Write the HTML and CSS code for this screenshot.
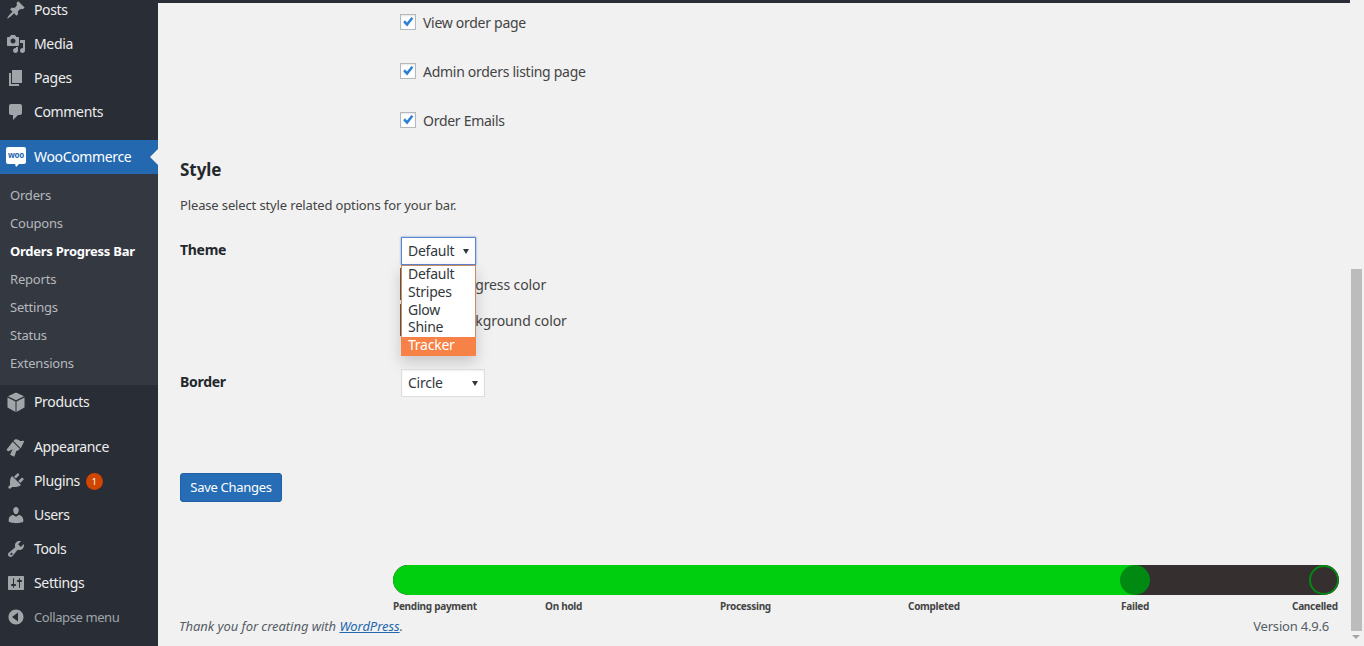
FILE: index.html
```html
<!DOCTYPE html>
<html lang="en">
<head>
<meta charset="utf-8">
<title>Orders Progress Bar</title>
<link rel="stylesheet" href="styles.css">
</head>
<body>
<div class="shell">
  <nav class="sidebar">
    <a class="item"><svg class="ico" viewBox="0 0 20 20"><path d="M10.44 3.02l1.82-1.82 6.36 6.35-1.83 1.82c-1.05-.68-2.48-.57-3.41.36l-.75.75c-.92.93-1.04 2.35-.35 3.41l-1.83 1.82-2.41-2.41-2.8 2.79c-.42.42-3.38 2.71-3.8 2.29s1.86-3.39 2.28-3.81l2.79-2.79L4.1 9.36l1.83-1.82c1.05.69 2.48.57 3.4-.36l.75-.75c.93-.92 1.05-2.35.36-3.41z"/></svg><span>Posts</span></a>
    <a class="item"><svg class="ico" viewBox="0 0 20 20"><path d="M13 11V4c0-.55-.45-1-1-1h-1.67L9 1H5L3.67 3H2c-.55 0-1 .45-1 1v7c0 .55.45 1 1 1h10c.55 0 1-.45 1-1zM7 4.500c1.380 0 2.500 1.120 2.500 2.500S8.380 9.500 7 9.500 4.500 8.380 4.500 7 5.620 4.500 7 4.500zM14 6h5v10.500c0 1.380-1.120 2.500-2.500 2.500S14 17.880 14 16.500s1.120-2.500 2.500-2.500c.17 0 .34.020.5.050V9h-3V6zm-4 8.050V13h2v3.500c0 1.380-1.120 2.500-2.500 2.500S7 17.880 7 16.500 8.120 14 9.500 14c.17 0 .34.020.5.050z"/></svg><span>Media</span></a>
    <a class="item"><svg class="ico" viewBox="0 0 20 20"><path d="M6 15V2h10v13H6zm-1 1h8v2H3V5h2v11z"/></svg><span>Pages</span></a>
    <a class="item"><svg class="ico" viewBox="0 0 20 20"><path d="M5 2h9c1.100 0 2 .9 2 2v7c0 1.100-.9 2-2 2h-2l-5 5v-5H5c-1.100 0-2-.9-2-2V4c0-1.100.9-2 2-2z"/></svg><span>Comments</span></a>
    <div class="current">
      <a class="item item-current"><svg class="ico woo" viewBox="0 0 20 20"><path class="woo-bg" d="M2 0h16a2 2 0 0 1 2 2v13a2 2 0 0 1-2 2h-5l-3 3-1-3H2a2 2 0 0 1-2-2V2a2 2 0 0 1 2-2z"/><text class="woo-text" x="10" y="11" text-anchor="middle">woo</text></svg><span>WooCommerce</span></a>
      <ul class="submenu">
        <li>Orders</li>
        <li>Coupons</li>
        <li class="sub-on">Orders Progress Bar</li>
        <li>Reports</li>
        <li>Settings</li>
        <li>Status</li>
        <li>Extensions</li>
      </ul>
    </div>
    <a class="item"><svg class="ico" viewBox="0 0 20 20"><path d="M10 .5l8 3.800-8 4-8-4zM1.500 5.500l8 4V20l-8-4.500zM18.500 5.500l-8 4V20l8-4.500z"/></svg><span>Products</span></a>
    <a class="item item-gap"><svg class="ico" viewBox="0 0 20 20"><path d="M14.480 11.060L7.410 3.990l1.500-1.500c.5-.56 2.300-.47 3.510.32 1.210.8 1.430 1.280 2.420 1.280.99 0 1.430-.5 2.110-.46.680.04 1.260.56 1.260.56l-3.730 7.870zM6.700 4.700l7.070 7.070-1.410 1.420c-.67.680-1.340.680-2.010.58l-1.990 6.070-3.740-1.790c-.27-.13-.62-.32-.4-.8l2.400-5.100-3.570 1.880c-.5.250-.87.320-1.090.1L.5 12.700 6.700 4.700z"/></svg><span>Appearance</span></a>
    <a class="item"><svg class="ico" viewBox="0 0 20 20"><path d="M13.110 4.360L9.870 7.600 8 5.730l3.240-3.240c.35-.34 1.050-.2 1.560.31.52.52.66 1.220.31 1.560zm-8 1.770l.91-1.120 9.010 9.010-1.190.84c-.71.710-2.630 1.160-3.820 1.160H6.140L4.900 17.260c-.59.590-1.540.59-2.120 0-.59-.58-.59-1.530 0-2.120l1.240-1.240v-3.880c0-1.130.52-3.020 1.090-3.890zm7.260 3.970l3.240-3.240c.34-.35 1.040-.21 1.550.31.520.51.660 1.210.31 1.550l-3.240 3.250z"/></svg><span>Plugins</span><b class="badge">1</b></a>
    <a class="item"><svg class="ico" viewBox="0 0 20 20"><path d="M10 9.250c-2.270 0-2.730-3.440-2.730-3.440C7 4.020 7.820 2 9.970 2c2.160 0 2.980 2.020 2.710 3.810 0 0-.41 3.440-2.680 3.440zm0 2.570L12.720 10c2.390 0 4.520 2.330 4.520 4.530v2.490s-3.650 1.130-7.240 1.130c-3.650 0-7.240-1.130-7.240-1.130v-2.490c0-2.250 1.940-4.480 4.430-4.480z"/></svg><span>Users</span></a>
    <a class="item"><svg class="ico" viewBox="0 0 20 20"><path d="M16.680 9.770c-1.340 1.340-3.300 1.670-4.950.99l-5.410 6.520c-.99.990-2.590.99-3.570 0-.99-.98-.99-2.580 0-3.570l6.520-5.420c-.68-1.650-.35-3.610.99-4.950 1.280-1.280 3.120-1.620 4.720-1.060l-2.890 2.890 2.820 2.820 2.860-2.870c.53 1.580.18 3.390-1.090 4.650zM4.620 15.800c.45.450 1.180.450 1.630 0s.45-1.180 0-1.630-1.180-.45-1.630 0-.45 1.180 0 1.630z"/></svg><span>Tools</span></a>
    <a class="item"><svg class="ico" viewBox="0 0 20 20"><path d="M18 16V4c0-.55-.45-1-1-1H3c-.55 0-1 .45-1 1v12c0 .55.45 1 1 1h14c.55 0 1-.45 1-1zM8 11h1c.55 0 1 .45 1 1s-.45 1-1 1H8v1.500c0 .28-.22.5-.5.5s-.5-.22-.5-.5V13H6c-.55 0-1-.45-1-1s.45-1 1-1h1V5.500c0-.28.22-.5.5-.5s.5.22.5.5V11zm5-2h-1c-.55 0-1-.45-1-1s.45-1 1-1h1V5.500c0-.28.22-.5.5-.5s.5.22.5.5V7h1c.55 0 1 .45 1 1s-.45 1-1 1h-1v5.500c0 .28-.22.5-.5.5s-.5-.22-.5-.5V9z"/></svg><span>Settings</span></a>
    <a class="item item-collapse"><svg class="ico" viewBox="0 0 20 20"><path d="M10 2.500c-4.140 0-7.500 3.360-7.500 7.500s3.360 7.500 7.500 7.500 7.500-3.360 7.500-7.500-3.360-7.500-7.500-7.500zM12 14.500L6 10l6-4.500v9z"/></svg><span>Collapse menu</span></a>
  </nav>

  <main class="main">
    <div class="wrap">
      <div class="check-list">
        <label class="check"><i class="box"><svg viewBox="0 0 16 16"><path d="M2.500 8.200l2-2.100 2.300 2.500L12 2.300l2.100 1.800L7 13z"/></svg></i>View order page</label>
        <label class="check"><i class="box"><svg viewBox="0 0 16 16"><path d="M2.500 8.200l2-2.100 2.300 2.500L12 2.300l2.100 1.800L7 13z"/></svg></i>Admin orders listing page</label>
        <label class="check"><i class="box"><svg viewBox="0 0 16 16"><path d="M2.500 8.200l2-2.100 2.300 2.500L12 2.300l2.100 1.800L7 13z"/></svg></i>Order Emails</label>
      </div>

      <h2 class="title">Style</h2>
      <p class="desc">Please select style related options for your bar.</p>

      <div class="row row-theme">
        <div class="row-label">Theme</div>
        <div class="row-field">
          <div class="select select-open">Default<i class="caret"></i></div>
          <div class="color-line"><i class="swatch"></i>Progress color</div>
          <div class="color-line"><i class="swatch"></i>Background color</div>
          <ul class="dropdown">
            <li>Default</li>
            <li>Stripes</li>
            <li>Glow</li>
            <li>Shine</li>
            <li class="dropdown-on">Tracker</li>
          </ul>
        </div>
      </div>

      <div class="row row-border">
        <div class="row-label">Border</div>
        <div class="row-field">
          <div class="select select-border">Circle<i class="caret"></i></div>
        </div>
      </div>

      <button class="save" type="button">Save Changes</button>

      <section class="tracker">
        <div class="track">
          <div class="fill"></div>
          <i class="dot dot-failed"></i>
          <i class="dot dot-cancelled"></i>
        </div>
        <div class="steps">
          <span class="step">Pending payment</span>
          <span class="step">On hold</span>
          <span class="step">Processing</span>
          <span class="step">Completed</span>
          <span class="step">Failed</span>
          <span class="step">Cancelled</span>
        </div>
      </section>

      <footer class="foot">
        <em class="thanks">Thank you for creating with <a class="foot-link">WordPress</a>.</em>
        <span class="version">Version 4.9.6</span>
      </footer>
    </div>
  </main>

  <div class="scrollbar">
    <div class="thumb"></div>
    <i class="arrow"></i>
  </div>
</div>
</body>
</html>
```

FILE: styles.css
```css
* { box-sizing: border-box; }
html, body { margin: 0; height: 646px; overflow: hidden; }
body {
  background: #f1f1f1;
  color: #444;
  font-family: "Noto Sans", "Open Sans", sans-serif;
  font-size: 13px;
}
ul { list-style: none; margin: 0; padding: 0; }

.shell { display: flex; height: 646px; }

/* Sidebar */
.sidebar {
  width: 158px;
  flex: none;
  background: #292d35;
  color: #eee;
  margin-top: -7px;
  height: 653px;
}
.item {
  display: flex;
  align-items: center;
  height: 34px;
  padding-left: 6px;
  font-size: 14px;
  letter-spacing: -0.35px;
  color: #eee;
  position: relative;
}
.item span { margin-left: 8px; padding-bottom: 2px; }
.ico { width: 20px; height: 20px; fill: #a0a5aa; flex: none; }
.current { margin-top: 11px; }
.item-current { background: #2468b0; color: #fff; }
.item-current::after {
  content: "";
  position: absolute;
  right: 0;
  top: 9px;
  border: 8px solid transparent;
  border-right-color: #f1f1f1;
  border-left-width: 0;
}
.woo-bg { fill: #fff; }
.woo-text { fill: #2468b0; font-size: 8px; font-weight: 700; font-family: "Noto Sans", sans-serif; letter-spacing: -0.2px; }
.submenu { background: #343841; padding: 7px 0 8px; }
.submenu li {
  height: 28px;
  line-height: 28px;
  padding-left: 10px;
  font-size: 13px;
  letter-spacing: -0.2px;
  color: #b4b9be;
}
.submenu .sub-on { color: #fff; font-weight: 700; letter-spacing: -0.25px; }
.item-gap { margin-top: 11px; }
.badge {
  margin-left: 6px;
  width: 17px;
  height: 17px;
  line-height: 17px;
  border-radius: 50%;
  background: #d04500;
  color: #fff;
  font-size: 9px;
  font-weight: 400;
  text-align: center;
  letter-spacing: 0;
}
.item-collapse { font-size: 13px; color: #a0a5aa; letter-spacing: -0.4px; }
.item-collapse span { padding-bottom: 0; }

/* Main */
.main { flex: 1; min-width: 0; border-top: 3px solid #292d35; }
.wrap { padding-left: 22px; padding-right: 21px; position: relative; }

.check-list {
  display: flex;
  flex-direction: column;
  gap: 33px;
  padding-left: 220px;
  padding-top: 11px;
}
.check {
  display: flex;
  align-items: center;
  height: 16px;
  font-size: 14px;
  letter-spacing: -0.28px;
  color: #444;
}
.box {
  width: 16px;
  height: 16px;
  border: 1px solid #b4b9be;
  background: #fff;
  margin-right: 7px;
  flex: none;
  box-shadow: inset 0 1px 2px rgba(0, 0, 0, .1);
}
.box svg { display: block; width: 14px; height: 14px; fill: #2b7fd4; }

.title {
  margin: 0;
  padding-top: 31px;
  font-size: 17px;
  line-height: 22px;
  font-weight: 700;
  color: #23282d;
  letter-spacing: -0.05px;
}
.desc { margin: 15px 0 0; font-size: 13px; line-height: 18px; letter-spacing: -0.14px; }

.row { display: flex; }
.row-label { width: 221px; flex: none; font-size: 14px; font-weight: 700; letter-spacing: -0.3px; color: #23282d; line-height: 20px; }
.row-field { position: relative; flex: 1; }
.row-theme { margin-top: 23px; height: 132px; }
.row-theme .row-label { padding-top: 3px; }
.row-border .row-label { padding-top: 3px; }

.select {
  position: relative;
  height: 28px;
  line-height: 26px;
  padding-left: 6px;
  border: 1px solid #ddd;
  background: #fff;
  font-size: 14px;
  letter-spacing: -0.25px;
  color: #32373c;
  box-shadow: inset 0 1px 2px rgba(0, 0, 0, .07);
}
.select-open { width: 75px; border-color: #5b86d0; box-shadow: 0 0 2px rgba(60, 110, 200, .7); }
.select-border { width: 84px; }
.caret {
  position: absolute;
  right: 6px;
  top: 11px;
  border-style: solid;
  border-width: 5px 3px 0;
  border-color: #32373c transparent transparent;
}
.color-line {
  display: flex;
  align-items: center;
  height: 36px;
  margin-left: -1px;
  font-size: 14px;
  letter-spacing: -0.1px;
  color: #444;
}
.color-line:nth-child(2) { margin-top: 1px; }
.swatch { width: 46px; height: 32px; margin-right: 7px; background: #6b5a4a; flex: none; }
.color-line:nth-child(3) .swatch { width: 45px; margin-right: 7px; }
.dropdown {
  position: absolute;
  left: 0;
  top: 28px;
  width: 75px;
  height: 91px;
  background: #fff;
  border: 1px solid #c98a62;
  border-bottom: 0;
  font-size: 14px;
  letter-spacing: -0.25px;
  color: #32373c;
  box-shadow: 0 6px 14px rgba(0, 0, 0, .18);
}
.dropdown li { height: 17.75px; line-height: 15.75px; padding-left: 6px; }
.dropdown .dropdown-on { background: #f68247; color: #fff; margin: 0 -1px; padding-left: 7px; height: 19px; }

.save {
  display: block;
  margin-top: 76px;
  width: 102px;
  height: 29px;
  background: #266db5;
  border: 1px solid #1f5fa5;
  border-radius: 3px;
  color: #fff;
  font-family: inherit;
  font-size: 13px;
  letter-spacing: -0.3px;
  padding: 0 0 2px;
}

.tracker { margin: 63px 0 0 213px; width: 946px; }
.track { position: relative; height: 30px; border-radius: 15px; background: #352f2f; overflow: hidden; }
.fill { width: 742px; height: 30px; background: #00cf10; border-radius: 15px 0 0 15px; }
.dot { position: absolute; top: 0; width: 30px; height: 30px; border-radius: 50%; }
.dot-failed { left: 727px; background: #008a12; }
.dot-cancelled { right: 0; background: #352f2f; border: 2px solid #008a12; }
.steps {
  display: grid;
  grid-template-columns: 152px 175px 188px 213px 171px 47px;
  margin-top: 4px;
}
.step { font-size: 10px; font-weight: 700; letter-spacing: -0.28px; color: #444; line-height: 15px; white-space: nowrap; }

.foot {
  display: flex;
  justify-content: space-between;
  margin: 3px 0 0 -1px;
  font-size: 13px;
  line-height: 18px;
  color: #555d66;
}
.thanks { letter-spacing: -0.05px; }
.version { letter-spacing: -0.2px; }
.foot-link { color: #2468b0; text-decoration: underline; }

/* Scrollbar */
.scrollbar { width: 14px; flex: none; background: #f1f1f1; position: relative; padding: 269px 2px 15px 1px; }
.thumb { height: 362px; background: #bcbcbc; }
.arrow {
  position: absolute;
  left: 2px;
  bottom: 7px;
  border-style: solid;
  border-width: 4px 4px 0;
  border-color: #a3a3a3 transparent transparent;
}
```
